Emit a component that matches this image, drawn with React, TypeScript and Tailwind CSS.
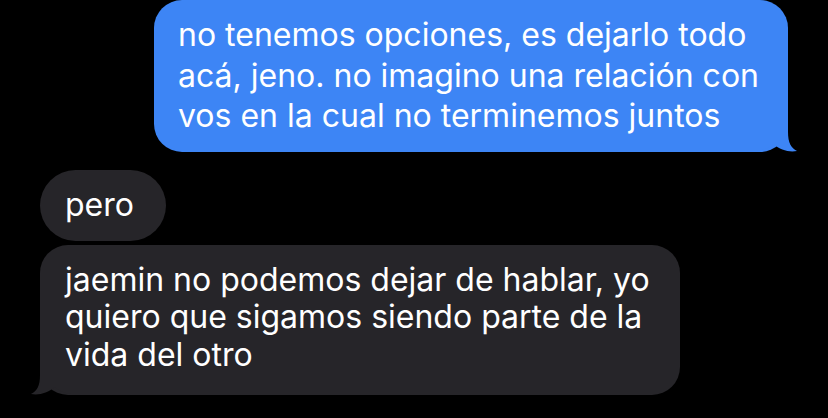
const blueLines = [
  'no tenemos opciones, es dejarlo todo',
  'acá, jeno. no imagino una relación con',
  'vos en la cual no terminemos juntos',
];

const grayLines = [
  'jaemin no podemos dejar de hablar, yo',
  'quiero que sigamos siendo parte de la',
  'vida del otro',
];

// little curled tail under the last bubble of a group
const Tail = ({ color, flip }: { color: string; flip?: boolean }) => (
  <svg
    width="55"
    height="38"
    viewBox="0 0 55 38"
    className={`absolute bottom-0 ${flip ? '-left-[12px] -scale-x-100' : '-right-[12px]'}`}
  >
    <path
      d="M0 0 L43 0 L43 18 C43 29 46 34 52 37 C44 38.5 35 36 28.5 30 C23 34.5 17 37 9 37 L0 37 Z"
      fill={color}
    />
  </svg>
);

export default function App() {
  return (
    <div
      className="h-[418px] w-[828px] overflow-hidden bg-black text-white"
      style={{ fontFamily: 'Inter, "Noto Sans", sans-serif' }}
    >
      <div className="flex justify-end pr-[40px]">
        <div className="relative w-[634px] rounded-[28px] bg-[#3d85f5] pb-[15px] pl-[24px] pt-[15px] text-[32px] leading-[40.5px]">
          {blueLines.map((line) => (
            <div key={line} className="relative z-10 whitespace-nowrap">
              {line}
            </div>
          ))}
          <Tail color="#3d85f5" />
        </div>
      </div>

      <div className="mt-[18px] flex flex-col items-start gap-[4px] pl-[40px]">
        <div className="rounded-full bg-[#262529] py-[16.5px] pl-[25px] pr-[32px] text-[32px] leading-[38px]">
          pero
        </div>
        <div className="relative w-[640px] rounded-[28px] bg-[#262529] pb-[22px] pl-[25px] pt-[16px] text-[32px] leading-[37.5px]">
          {grayLines.map((line) => (
            <div key={line} className="relative z-10 whitespace-nowrap">
              {line}
            </div>
          ))}
          <Tail color="#262529" flip />
        </div>
      </div>
    </div>
  );
}
